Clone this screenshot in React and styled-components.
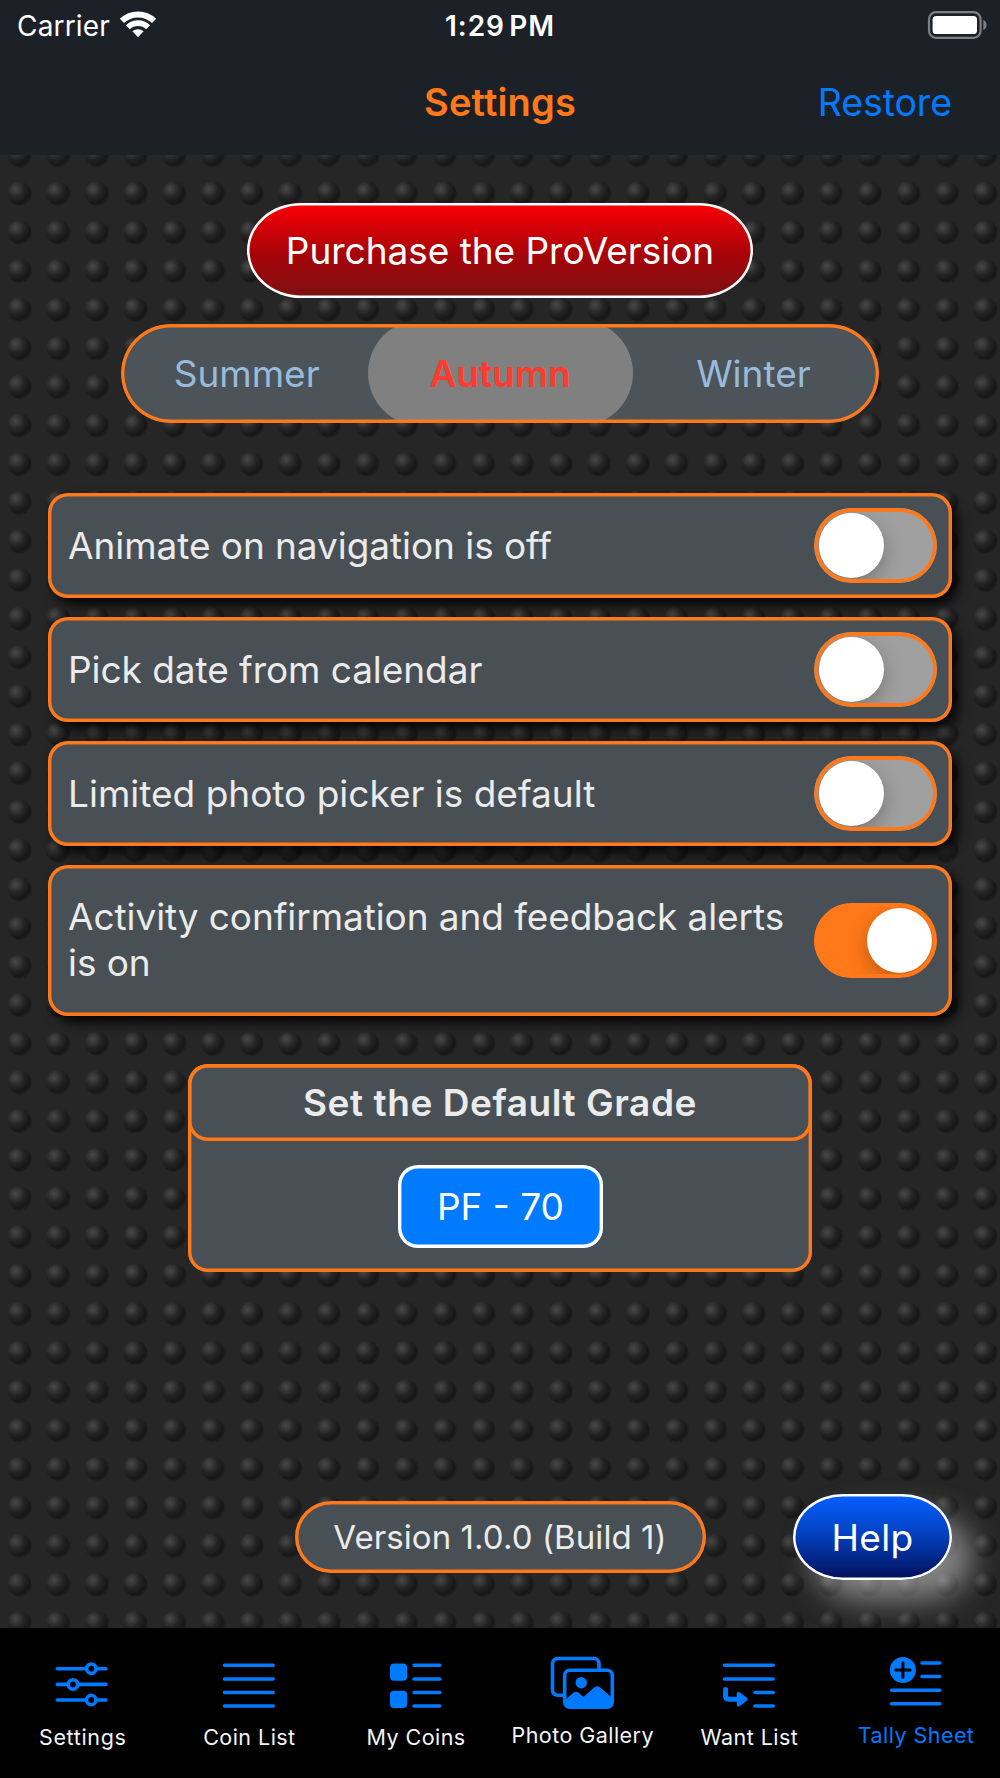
import React, { useState } from 'react'
import styled, { createGlobalStyle } from 'styled-components'

const orange = '#ff7819'
const blue = '#007aff'
const slate = '#485055'

const GlobalStyle = createGlobalStyle`
  * {
    box-sizing: border-box;
  }
  body {
    margin: 0;
    background: #000;
    font-family: Inter, 'Liberation Sans', sans-serif;
  }
  button {
    font-family: inherit;
    padding: 0;
    margin: 0;
    cursor: pointer;
  }
`

const Screen = styled.div`
  width: 1000px;
  height: 1778px;
  display: flex;
  flex-direction: column;
  overflow: hidden;
`

const Header = styled.header`
  height: 154.67px;
  flex: none;
  background: #1c2027;
  color: #fff;
`

const StatusBar = styled.div`
  height: 51px;
  padding: 0 13px 0 17px;
  display: grid;
  grid-template-columns: 1fr auto 1fr;
  align-items: center;
  font-size: 28px;
  line-height: 52px;
`

const Carrier = styled.div`
  display: flex;
  align-items: center;
  gap: 9px;
  letter-spacing: 0.18px;

  svg {
    position: relative;
    top: -2px;
  }
`

const Time = styled.div`
  font-weight: 600;
  letter-spacing: 0.9px;
  word-spacing: -3.5px;
  padding-right: 4px;
`

const Battery = styled.div`
  justify-self: end;
  display: flex;
  position: relative;
  top: -1px;
`

const NavBar = styled.div`
  height: 103px;
  padding: 0 48px;
  display: grid;
  grid-template-columns: 1fr auto 1fr;
  align-items: center;
`

const Title = styled.h1`
  grid-column: 2;
  margin: 0;
  font-size: 38px;
  font-weight: 600;
  line-height: 103px;
  letter-spacing: 0.15px;
  color: ${orange};
`

const Restore = styled.button`
  justify-self: end;
  border: 0;
  background: none;
  color: ${blue};
  font-size: 37.5px;
  letter-spacing: -0.1px;
`

const Main = styled.main`
  flex: 1;
  position: relative;
  padding: 48.3px 48px 48px;
  display: flex;
  flex-direction: column;
  align-items: center;
  background: #262626;
`

const Texture = styled.svg`
  position: absolute;
  inset: 0;
  width: 100%;
  height: 100%;
`

const Purchase = styled.button`
  position: relative;
  width: 506px;
  height: 95px;
  border: 0;
  border-radius: 54px / 47.5px;
  background: linear-gradient(#fb0006, #a60408 55%, #7c1113);
  box-shadow: inset 0 0 0 2.5px #fff;
  color: #fff;
  font-size: 37px;
  letter-spacing: -0.03px;
`

const Segments = styled.div`
  position: relative;
  width: 758.5px;
  height: 98.6px;
  margin-top: 26px;
  border-radius: 50px;
  background: #4c545a;
  display: grid;
  grid-template-columns: repeat(3, 253.4px);
  justify-content: center;
  align-items: center;
  overflow: hidden;

  &::after {
    content: '';
    position: absolute;
    inset: 0;
    border-radius: inherit;
    box-shadow: inset 0 0 0 3.4px ${orange};
    pointer-events: none;
  }
`

const Segment = styled.button`
  border: 0;
  height: ${(p) => (p.$active ? '106px' : '92px')};
  margin: ${(p) => (p.$active ? '-7px -5.8px' : '0')};
  border-radius: 53px;
  background: ${(p) => (p.$active ? '#808080' : 'transparent')};
  color: ${(p) => (p.$active ? '#ff3b30' : '#98bbdb')};
  font-size: 37px;
  font-weight: ${(p) => (p.$active ? 600 : 400)};
`

const OptionList = styled.div`
  position: relative;
  align-self: stretch;
  margin-top: 70.4px;
  display: flex;
  flex-direction: column;
  gap: 18.7px;
`

const Option = styled.div`
  min-height: 105.3px;
  padding: 29px 15px 29px 20px;
  border-radius: 20px;
  background: ${slate};
  box-shadow: inset 0 0 0 3.4px ${orange}, 6px 7px 12px rgba(0, 0, 0, 0.85);
  display: flex;
  align-items: center;
  justify-content: space-between;
`

const OptionText = styled.div`
  color: #ebebeb;
  font-size: 37px;
  line-height: 46px;
  letter-spacing: ${(p) => p.$tracking}px;
  white-space: pre-line;
`

const TallOption = styled(Option)`
  min-height: 151px;
`

const Switch = styled.button`
  flex: none;
  width: 123.5px;
  height: 75px;
  margin: -14px 0;
  padding: 0 5px;
  border: 0;
  border-radius: 38px;
  background: ${(p) => (p.$on ? orange : '#a0a0a0')};
  display: flex;
  align-items: center;
  justify-content: ${(p) => (p.$on ? 'flex-end' : 'flex-start')};
  position: relative;
  overflow: hidden;

  &::after {
    content: '';
    position: absolute;
    inset: 0;
    border-radius: inherit;
    box-shadow: inset 0 0 0 3.9px ${orange};
  }
`

const Knob = styled.span`
  width: 65.5px;
  height: 65.5px;
  border-radius: 50%;
  background: #fff;
  box-shadow: 0 7px 20px rgba(0, 0, 0, 0.26);
`

const GradeCard = styled.section`
  position: relative;
  width: 623.4px;
  height: 208px;
  margin-top: 47.9px;
  border-radius: 20px;
  background: ${slate};
  box-shadow: inset 0 0 0 3.4px ${orange};
  display: flex;
  flex-direction: column;
  align-items: center;
`

const GradeTitle = styled.h2`
  width: 100%;
  height: 77.3px;
  margin: 0;
  border-radius: 20px;
  box-shadow: inset 0 0 0 3.4px ${orange};
  color: #ebebeb;
  font-size: 37px;
  font-weight: 600;
  line-height: 77px;
  letter-spacing: 0.55px;
  text-align: center;
`

const GradeButton = styled.button`
  width: 204.8px;
  height: 83px;
  margin: 24px 0 0 0.8px;
  border: 0;
  border-radius: 20px;
  background: ${blue};
  box-shadow: inset 0 0 0 3.4px #fff;
  color: #fff;
  font-size: 37px;
`

const Footer = styled.footer`
  position: relative;
  align-self: stretch;
  margin-top: auto;
  display: grid;
  grid-template-columns: 1fr auto 1fr;
  align-items: center;
`

const Version = styled.div`
  grid-column: 2;
  width: 411px;
  height: 72px;
  border-radius: 36px;
  background: ${slate};
  box-shadow: inset 0 0 0 3.4px ${orange};
  color: #ebebeb;
  font-size: 33px;
  line-height: 72px;
  letter-spacing: 0.08px;
  text-align: center;
`

const Help = styled.button`
  justify-self: end;
  width: 159px;
  height: 86px;
  border: 0;
  border-radius: 50px / 43px;
  background: linear-gradient(#0560ff, #0445c8 42%, #020f58);
  box-shadow: inset 0 0 0 2.5px #fff, 20px 20px 30px rgba(190, 190, 190, 0.62);
  color: #fff;
  font-size: 37px;
  letter-spacing: 0.3px;
`

const TabBar = styled.nav`
  position: relative;
  height: 150px;
  flex: none;
  background: #000;
  display: grid;
  grid-template-columns: repeat(6, 1fr);
`

const Tab = styled.a`
  padding-top: 22px;
  display: flex;
  flex-direction: column;
  align-items: center;
  color: ${blue};
`

const TabLabel = styled.span`
  margin-top: ${(p) => (p.$raised ? 12 : 13.5)}px;
  padding-right: 1.2px;
  color: ${(p) => (p.$active ? blue : '#f4f4f4')};
  font-size: 21.5px;
  line-height: 26px;
  letter-spacing: ${(p) => p.$tracking || 0.45}px;
  white-space: nowrap;
`

const TabIcon = ({ children }) => (
  <svg width="68" height="60" viewBox="-2 0 68 60" fill="none" stroke="currentColor" strokeWidth="3.6" strokeLinecap="round">
    {children}
  </svg>
)

const WifiIcon = () => (
  <svg width="38" height="28" viewBox="0 0 38 28" fill="none" stroke="#fff">
    <path d="M2.9 10.9a23.2 23.2 0 0 1 32.2 0" strokeWidth="6" />
    <path d="M8.9 17.3a14.4 14.4 0 0 1 20.2 0" strokeWidth="5.6" />
    <path d="M13.4 21.3a8.4 8.4 0 0 1 11.2 0L19 27.2z" fill="#fff" stroke="none" />
  </svg>
)

const BatteryIcon = () => (
  <svg width="60" height="28" viewBox="0 0 60 28">
    <rect x="2" y="1.2" width="51.6" height="25.6" rx="7" fill="none" stroke="#7d8084" strokeWidth="2.2" />
    <rect x="5.6" y="5" width="44.4" height="18" rx="3.6" fill="#fff" />
    <path d="M56.3 9c4.4 1.6 4.4 8.6 0 10.2z" fill="#7d8084" />
  </svg>
)

const SlidersIcon = () => (
  <TabIcon>
    <path d="M6.3 18.7H34.5M46.5 18.7H55M6.3 34.4H16M28 34.4H55M6.3 50H34.5M46.5 50H55" />
    <circle cx="40.3" cy="18.7" r="4.7" />
    <circle cx="22" cy="34.4" r="4.7" />
    <circle cx="40.3" cy="50" r="4.7" />
  </TabIcon>
)

const LinesIcon = () => (
  <TabIcon>
    <path d="M6.5 15.3H55.2M6.5 29H55.2M6.5 42.5H55.2M6.5 56H55.2" />
  </TabIcon>
)

const GridListIcon = () => (
  <TabIcon>
    <g fill="currentColor" stroke="none">
      <rect x="5" y="13.6" width="17.2" height="17.2" rx="4" />
      <rect x="5" y="40.8" width="17.2" height="17.2" rx="4" />
    </g>
    <path d="M29 15.3H54.8M29 29H54.8M29 42.5H54.8M29 56H54.8" />
  </TabIcon>
)

const PhotosIcon = () => (
  <TabIcon>
    <path d="M13.5 45.3H6.5a5 5 0 0 1-5-5V13.5a5 5 0 0 1 5-5H43a5 5 0 0 1 5 5V20" strokeLinecap="butt" />
    <rect x="13.7" y="20.3" width="47.6" height="36.8" rx="5" />
    <g fill="currentColor" stroke="none">
      <circle cx="30.2" cy="32.7" r="5.7" />
      <path d="M13.5 50.5l8.6-7.6q3-2.3 5.8 0l4.6 4L43.4 37.3q2.8-2 5.5 0L62 48.5V52a6 6 0 0 1-6 6H19.5a6 6 0 0 1-6-6z" />
    </g>
  </TabIcon>
)

const WantIcon = () => (
  <TabIcon>
    <path d="M6.5 15.3H55.2M6.5 29H55.2M37 42.5H55.2M37 56H55.2" />
    <path d="M7.6 39.5v6.5q0 3.2 3.2 3.2H20" strokeWidth="5" />
    <path d="M20.5 43.5v11.4l7.4-5.7z" fill="currentColor" strokeWidth="3.4" strokeLinejoin="round" />
  </TabIcon>
)

const TallyIcon = () => (
  <TabIcon>
    <circle cx="17.9" cy="20" r="13" fill="currentColor" stroke="none" />
    <path d="M17.9 12.8V27.2M10.7 20H25.1" stroke="#000" strokeWidth="3" />
    <path d="M37 13H54.8M37 26.5H54.8M6.6 40.3H54.8M6.6 53.8H54.8" />
  </TabIcon>
)

const seasons = ['Summer', 'Autumn', 'Winter']

const tabs = [
  { label: 'Settings', Icon: SlidersIcon, tracking: 0.65 },
  { label: 'Coin List', Icon: LinesIcon },
  { label: 'My Coins', Icon: GridListIcon },
  { label: 'Photo Gallery', Icon: PhotosIcon, raised: true },
  { label: 'Want List', Icon: WantIcon },
  { label: 'Tally Sheet', Icon: TallyIcon, raised: true, active: true },
]

const StuddedRubber = () => (
  <Texture aria-hidden="true">
    <defs>
      <radialGradient id="shade" cx="0.32" cy="0.3" r="0.75">
        <stop offset="0" stopColor="#484848" />
        <stop offset="0.2" stopColor="#3b3b3b" />
        <stop offset="0.5" stopColor="#252525" />
        <stop offset="0.85" stopColor="#171717" />
        <stop offset="1" stopColor="#1c1c1c" />
      </radialGradient>
      <pattern id="studs" x="0.3" y="19.3" width="38.636" height="38.636" patternUnits="userSpaceOnUse">
        <circle cx="19.3" cy="19.3" r="12.3" fill="url(#shade)" opacity="0.5" />
        <circle cx="19.3" cy="19.3" r="11.3" fill="url(#shade)" />
      </pattern>
    </defs>
    <rect width="100%" height="100%" fill="url(#studs)" />
  </Texture>
)

export default function App() {
  const [season, setSeason] = useState('Autumn')
  const [on, setOn] = useState({ animate: false, calendar: false, picker: false, alerts: true })
  const toggle = (key) => setOn((prev) => ({ ...prev, [key]: !prev[key] }))

  return (
    <>
      <GlobalStyle />
      <Screen>
        <Header>
          <StatusBar>
            <Carrier>
              Carrier
              <WifiIcon />
            </Carrier>
            <Time>1:29 PM</Time>
            <Battery>
              <BatteryIcon />
            </Battery>
          </StatusBar>
          <NavBar>
            <Title>Settings</Title>
            <Restore>Restore</Restore>
          </NavBar>
        </Header>

        <Main>
          <StuddedRubber />
          <Purchase>Purchase the ProVersion</Purchase>
          <Segments>
            {seasons.map((name) => (
              <Segment key={name} $active={name === season} onClick={() => setSeason(name)}>
                {name}
              </Segment>
            ))}
          </Segments>

          <OptionList>
            <Option>
              <OptionText $tracking={-0.06}>Animate on navigation is off</OptionText>
              <Switch $on={on.animate} onClick={() => toggle('animate')}><Knob /></Switch>
            </Option>
            <Option>
              <OptionText $tracking={-0.06}>Pick date from calendar</OptionText>
              <Switch $on={on.calendar} onClick={() => toggle('calendar')}><Knob /></Switch>
            </Option>
            <Option>
              <OptionText $tracking={0}>Limited photo picker is default</OptionText>
              <Switch $on={on.picker} onClick={() => toggle('picker')}><Knob /></Switch>
            </Option>
            <TallOption>
              <OptionText $tracking={-0.08}>{'Activity confirmation and feedback alerts\nis on'}</OptionText>
              <Switch $on={on.alerts} onClick={() => toggle('alerts')}><Knob /></Switch>
            </TallOption>
          </OptionList>

          <GradeCard>
            <GradeTitle>Set the Default Grade</GradeTitle>
            <GradeButton>PF - 70</GradeButton>
          </GradeCard>

          <Footer>
            <Version>Version 1.0.0 (Build 1)</Version>
            <Help>Help</Help>
          </Footer>
        </Main>

        <TabBar>
          {tabs.map(({ label, Icon, raised, active, tracking }) => (
            <Tab key={label}>
              <Icon />
              <TabLabel $raised={raised} $active={active} $tracking={tracking}>{label}</TabLabel>
            </Tab>
          ))}
        </TabBar>
      </Screen>
    </>
  )
}
